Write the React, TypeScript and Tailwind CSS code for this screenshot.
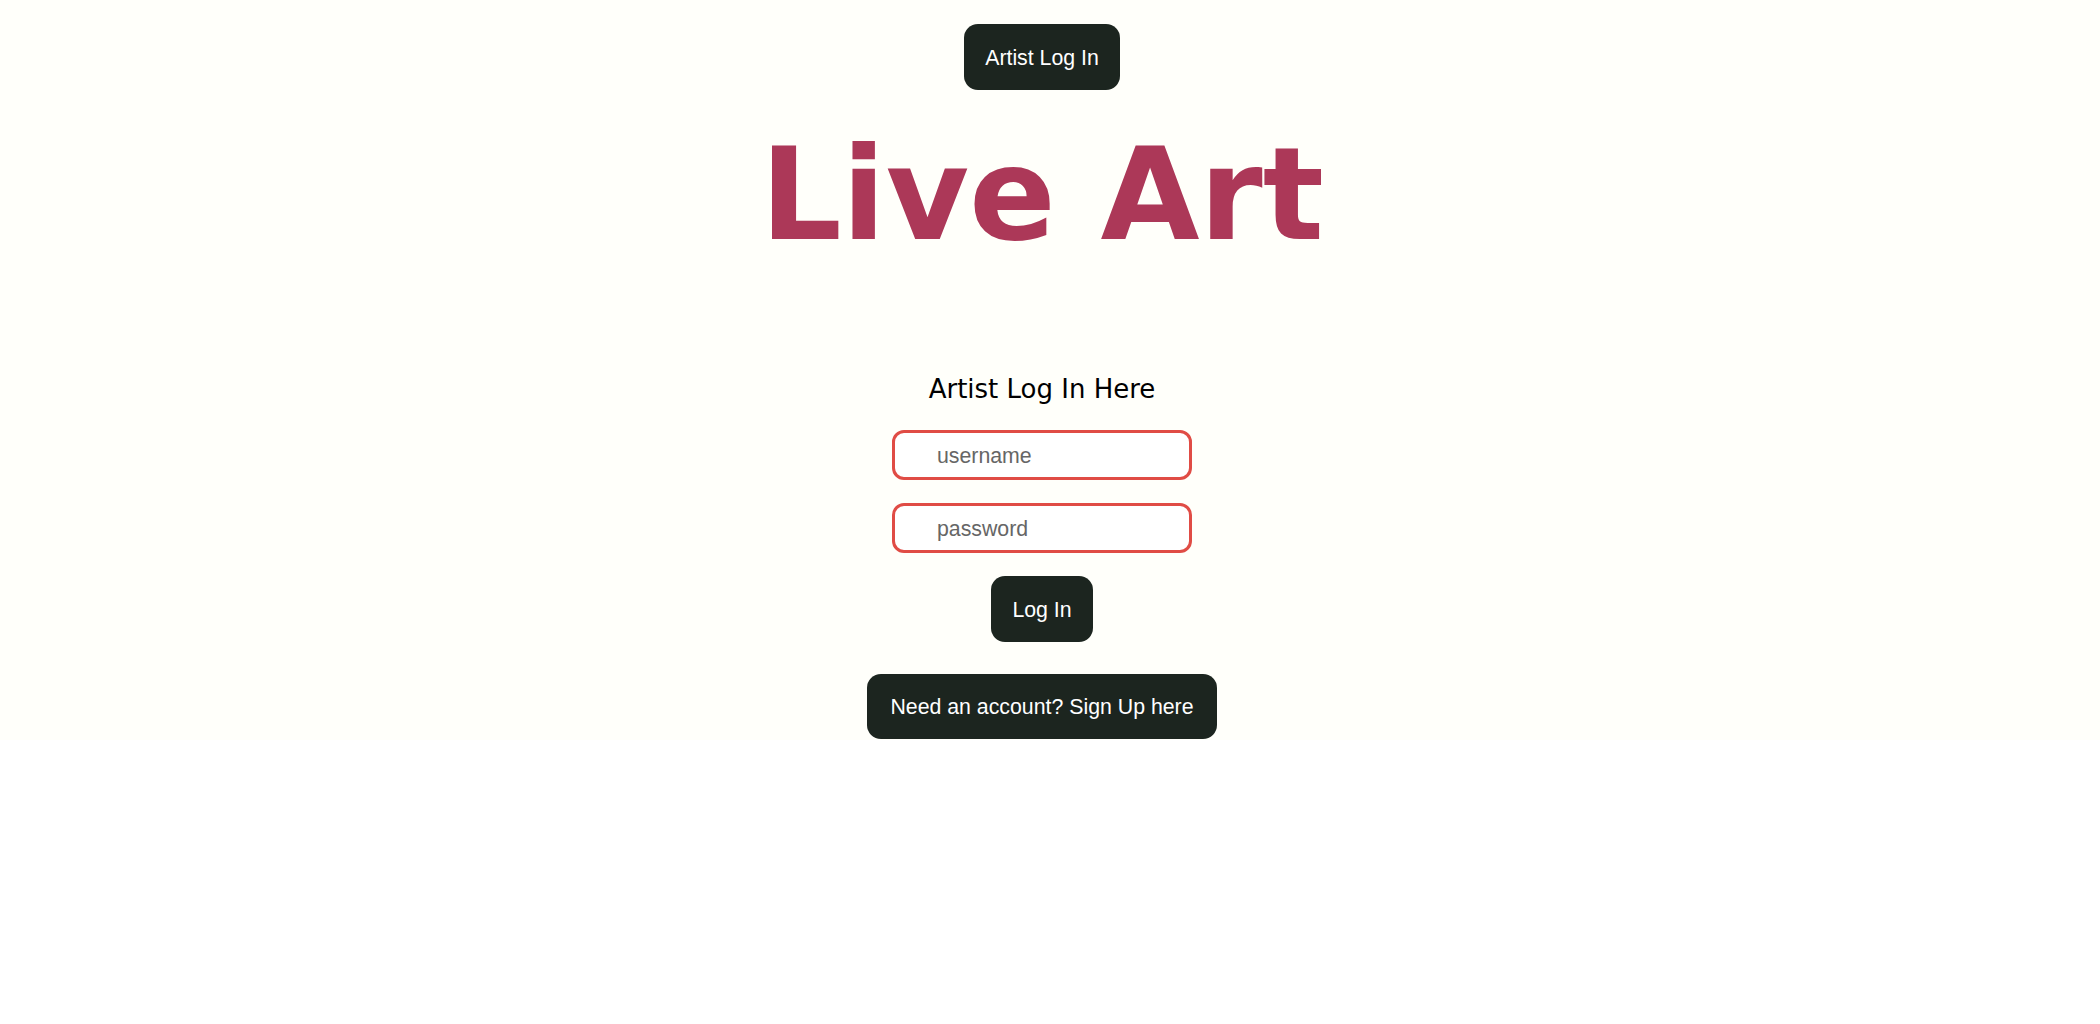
import React from "react";

export default function App() {
  const btn =
    "bg-[#1c251f] text-white rounded-[14px] text-[21.3px] font-['Liberation_Sans',Arial,sans-serif] flex items-center justify-center pt-[3px]";
  return (
    <div className="w-full bg-[#fffffa] flex flex-col items-center pt-[24px] pr-[16px] pb-[1px]">
      <button className={`${btn} h-[66px] px-[21px]`}>Artist Log In</button>
      <h1 className="mt-[30px] text-[128px] leading-[149px] font-bold text-[#ac3858] font-['DejaVu_Sans',Verdana,sans-serif]">
        Live Art
      </h1>
      <h3 className="mt-[105px] text-[26px] leading-[30px] text-black font-['DejaVu_Sans',Verdana,sans-serif]">
        Artist Log In Here
      </h3>
      <div className="mt-[26px] flex flex-col gap-[23px]">
        <input
          type="text"
          placeholder="username"
          className="w-[300px] h-[50px] bg-white border-[3px] border-[#e04c45] rounded-[12px] pl-[42px] pt-[3px] text-[21.3px] font-['Liberation_Sans',Arial,sans-serif] placeholder:text-[#666] outline-none"
        />
        <input
          type="password"
          placeholder="password"
          className="w-[300px] h-[50px] bg-white border-[3px] border-[#e04c45] rounded-[12px] pl-[42px] pt-[3px] text-[21.3px] font-['Liberation_Sans',Arial,sans-serif] placeholder:text-[#666] outline-none"
        />
      </div>
      <button className={`${btn} mt-[23px] h-[66px] px-[21px]`}>Log In</button>
      <button className={`${btn} mt-[32px] h-[65px] px-[23px]`}>Need an account? Sign Up here</button>
    </div>
  );
}
